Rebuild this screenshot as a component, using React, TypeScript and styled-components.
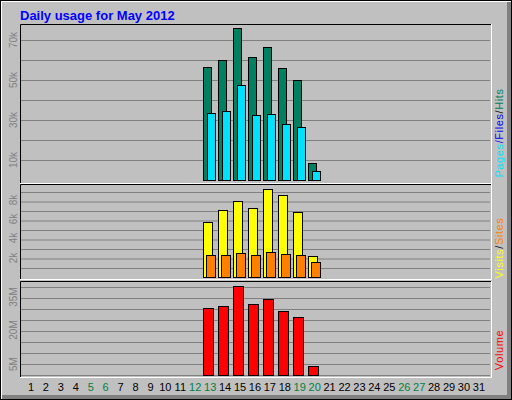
import styled, { createGlobalStyle } from "styled-components";

const Global = createGlobalStyle`
  body { margin: 0; background: #fff; }
`;

const Frame = styled.div`
  width: 512px;
  height: 400px;
  box-sizing: border-box;
  border: 1px solid #000;
  background: #c0c0c0;
  box-shadow: inset 1px 1px 0 #fff, inset -4px -4px 0 #808080;
  display: flex;
  flex-direction: column;
  font-family: "Liberation Sans", Arial, sans-serif;
`;

const Title = styled.div`
  height: 23px;
  padding-left: 19px;
  line-height: 30px;
  font-size: 13px;
  font-weight: bold;
  color: #0000ff;
`;

const Chart = styled.svg`
  display: block;
  font-family: "Liberation Sans", Arial, sans-serif;
`;

const cx = (d: number) => 31 + (d - 1) * 14.93;
const days = [13, 14, 15, 16, 17, 18, 19, 20];
const hits = [67, 60, 28, 57, 47, 68, 80, 163];
const pages = [113, 111, 85, 115, 114, 124, 127, 171];
const visits = [222, 210, 201, 208, 189, 195, 212, 256];
const sites = [255, 255, 253, 255, 252, 254, 255, 262];
const volume = [308, 306, 286, 304, 299, 311, 317, 366];
const weekend = [5, 6, 12, 13, 19, 20, 26, 27];

type PanelProps = { top: number; bottom: number; lines: number[] };

function Panel({ top, bottom, lines }: PanelProps) {
  return (
    <g>
      <rect x={20} y={top} width={471} height={bottom - top} fill="#c0c0c0" />
      {lines.map((y) => (
        <line key={y} x1={21} x2={490} y1={y + 0.5} y2={y + 0.5} stroke="#808080" />
      ))}
      <path d={`M20.5 ${bottom} V${top + 0.5} H491`} stroke="#000" fill="none" />
      <path d={`M20 ${bottom + 0.5} H491.5 V${top}`} stroke="#fff" fill="none" />
    </g>
  );
}

function Bar({ x, w, top, base, fill }: { x: number; w: number; top: number; base: number; fill: string }) {
  return <rect x={x + 0.5} y={top + 0.5} width={w} height={base - top} fill={fill} stroke="#000" />;
}

function VLabel({ x, y, children }: { x: number; y: number; children: React.ReactNode }) {
  return (
    <text x={x} y={y} transform={`rotate(-90 ${x} ${y})`} fontSize={10} fill="#808080" textAnchor="middle">
      {children}
    </text>
  );
}

export default function App() {
  const r = (n: number) => Array.from({ length: n });
  return (
    <Frame>
      <Global />
      <Title>Daily usage for May 2012</Title>
      <Chart width={510} height={375} viewBox="1 24 510 375">
        <Panel top={24} bottom={183} lines={r(7).map((_, i) => 40 + i * 20)} />
        <Panel top={184} bottom={279} lines={r(9).map((_, i) => 192 + i * 9.5)} />
        <Panel top={281} bottom={377} lines={r(9).map((_, i) => 287 + i * 11)} />

        <VLabel x={17} y={40}>70k</VLabel>
        <VLabel x={17} y={80}>50k</VLabel>
        <VLabel x={17} y={120}>30k</VLabel>
        <VLabel x={17} y={160}>10k</VLabel>
        <VLabel x={17} y={200}>8k</VLabel>
        <VLabel x={17} y={219}>6k</VLabel>
        <VLabel x={17} y={238}>4k</VLabel>
        <VLabel x={17} y={258}>2k</VLabel>
        <VLabel x={17} y={297}>35M</VLabel>
        <VLabel x={17} y={330}>20M</VLabel>
        <VLabel x={17} y={364}>5M</VLabel>

        {days.map((d, i) => (
          <g key={d}>
            <Bar x={Math.round(cx(d)) - 7} w={8} top={hits[i]} base={180} fill="#008060" />
            <Bar x={Math.round(cx(d)) - 3} w={8} top={pages[i]} base={180} fill="#00e0ff" />
            <Bar x={Math.round(cx(d)) - 7} w={9} top={visits[i]} base={277} fill="#ffff00" />
            <Bar x={Math.round(cx(d)) - 4} w={9} top={sites[i]} base={277} fill="#ff8000" />
            <Bar x={Math.round(cx(d)) - 7} w={10} top={volume[i]} base={375} fill="#ff0000" />
          </g>
        ))}

        {r(31).map((_, i) => (
          <text key={i} x={cx(i + 1)} y={391} fontSize={11} textAnchor="middle"
            fill={weekend.includes(i + 1) ? "#008040" : "#000"}>
            {i + 1}
          </text>
        ))}

        <text x={503} y={133} transform="rotate(-90 503 133)" fontSize={11} letterSpacing={0.6} textAnchor="middle">
          <tspan fill="#00e0ff">Pages</tspan><tspan fill="#0000ff">/</tspan>
          <tspan fill="#0000ff">Files</tspan><tspan fill="#000">/</tspan>
          <tspan fill="#008060">Hits</tspan>
        </text>
        <text x={503} y={248} transform="rotate(-90 503 248)" fontSize={11} letterSpacing={0.6} textAnchor="middle">
          <tspan fill="#ffff00">Visits</tspan><tspan fill="#000">/</tspan>
          <tspan fill="#ff8000">Sites</tspan>
        </text>
        <text x={503} y={350} transform="rotate(-90 503 350)" fontSize={11} letterSpacing={0.6} textAnchor="middle" fill="#ff0000">
          Volume
        </text>
      </Chart>
    </Frame>
  );
}
